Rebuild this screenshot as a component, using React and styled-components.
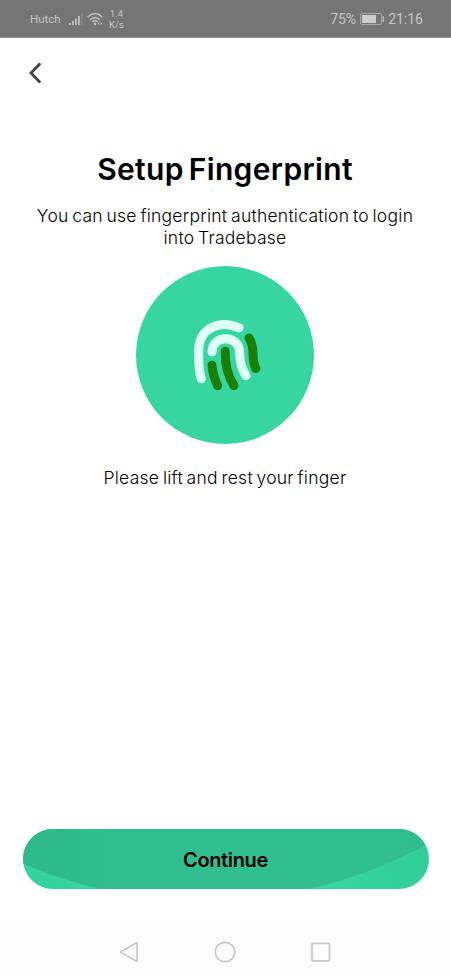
import styled, { createGlobalStyle } from 'styled-components'

const GlobalStyle = createGlobalStyle`
  * {
    box-sizing: border-box;
  }

  body {
    margin: 0;
    background: #ffffff;
    font-family: Inter, "Liberation Sans", sans-serif;
    color: #000000;
  }
`

const Screen = styled.div`
  display: flex;
  flex-direction: column;
  height: 100vh;
  overflow: hidden;
`

const StatusBar = styled.header`
  display: flex;
  justify-content: space-between;
  align-items: center;
  height: 38px;
  flex-shrink: 0;
  padding: 1px 28px 0 30px;
  background: #757575;
  border-bottom: 1px solid #949494;
  color: #c4c4c4;
  font-family: Roboto, sans-serif;
`

const StatusGroup = styled.div`
  display: flex;
  align-items: center;
  gap: 4px;

  svg {
    display: block;
    flex-shrink: 0;
  }
`

const Carrier = styled.span`
  width: 35px;
  font-size: 11.5px;
  line-height: 16px;
  white-space: nowrap;
`

const Speed = styled.span`
  margin-left: 1px;
  font-size: 9.5px;
  line-height: 11px;
  text-align: center;
`

const StatusText = styled.span`
  font-size: 14px;
  line-height: 18px;
`

const TopBar = styled.nav`
  display: flex;
  align-items: center;
  height: 69px;
  flex-shrink: 0;
  padding-left: 25px;
`

const BackButton = styled.button`
  display: flex;
  padding: 0;
  border: 0;
  background: none;
`

const Content = styled.main`
  display: flex;
  flex: 1;
  flex-direction: column;
  align-items: center;
  padding-top: 42px;
  padding-right: 1px;
  text-align: center;
`

const Title = styled.h1`
  margin: 0;
  font-size: 30px;
  font-weight: 600;
  line-height: 40px;
  letter-spacing: 0.35px;
  word-spacing: -3px;
  white-space: nowrap;
`

const Text = styled.p`
  margin: ${props => props.$margin};
  font-size: 17.5px;
  font-weight: 300;
  line-height: 22px;
  letter-spacing: 0.25px;
  word-spacing: -1.5px;
  white-space: nowrap;
`

const FingerprintCircle = styled.div`
  display: grid;
  place-items: center;
  width: 178px;
  height: 178px;
  padding-right: 1px;
  border-radius: 50%;
  background: #37d6a0;
`

const Footer = styled.footer`
  flex-shrink: 0;
  padding: 0 22.5px 37px;
`

const ContinueButton = styled.button`
  position: relative;
  display: block;
  width: 100%;
  height: 60px;
  padding: 2px 0 0;
  overflow: hidden;
  border: 0;
  border-radius: 30px;
  background: linear-gradient(90deg, #34d39e, #37d6a0 30%, #37d6a0 75%, #33cd99);
  color: #000000;
  font-family: inherit;
  font-size: 20px;
  font-weight: 600;
`

// Press ripple, mostly outside of the button
const Ripple = styled.span`
  position: absolute;
  top: -854px;
  left: -281px;
  width: 926px;
  height: 926px;
  border-radius: 50%;
  background: linear-gradient(90deg, #2eb98b 33%, #32bf90 41%, #32bf90 70%, #2eb88a 77%);
`

const Label = styled.span`
  position: relative;
  letter-spacing: -0.35px;
`

const NavigationBar = styled.nav`
  display: flex;
  justify-content: center;
  align-items: center;
  gap: 72px;
  height: 51px;
  flex-shrink: 0;
  padding-right: 1px;
  background: #fcfcfc;
`

const SignalIcon = () => (
  <svg width="14" height="13" viewBox="0 0 14 13" fill="#c4c4c4">
    <rect x="0" y="10" width="1.7" height="2" />
    <rect x="3" y="8" width="1.7" height="4" />
    <rect x="6" y="5.5" width="1.7" height="6.5" />
    <rect x="9" y="3" width="1.7" height="9" />
    <rect x="12" y="0" width="1.7" height="12" opacity="0.25" />
  </svg>
)

const WifiIcon = () => (
  <svg width="17" height="14" viewBox="0 0 17 14" fill="none" stroke="#c4c4c4" strokeWidth="1.4">
    <path d="M.7 5.1Q8 -1.9 15.3 5.1" />
    <path d="M3.1 7.8Q8 3.1 12.9 7.8" />
    <path d="M5.3 10.1Q8 7.6 10.7 10.1" />
    <circle cx="8" cy="12" r="1.2" fill="#c4c4c4" stroke="none" />
    <path d="M12.2 10v3l-1.2-1.3zM13.7 10v3l1.4-1.5z" fill="#c4c4c4" stroke="none" />
  </svg>
)

const BatteryIcon = () => (
  <svg width="24" height="12" viewBox="0 0 24 12">
    <rect x=".5" y=".5" width="21" height="11" rx="1.5" fill="none" stroke="#a8a8a8" />
    <rect x="2" y="2" width="14" height="8" fill="#cdcdcd" />
    <rect x="22.5" y="3" width="1.3" height="6" rx=".5" fill="#c4c4c4" />
  </svg>
)

const FingerprintIcon = () => (
  <svg width="90" height="90" viewBox="0 0 90 90" fill="none" strokeWidth="9" strokeLinecap="round">
    <g stroke="#e0fff4">
      <path d="M21.3 68.7C18.2 60 18.5 51 18.7 39.5C19.4 18.2 39.5 9.2 59.2 17.8" />
      <path d="M32 41.7C32 24.2 59.7 24 59.7 43.2C59.7 52 61.3 58.5 66 65.7" />
    </g>
    <g stroke="#1a7f08">
      <path d="M32 55.2Q33.1 66.4 37.7 75.8" />
      <path d="M45.2 41.2C45 55.3 47.2 65.2 54 75.8" />
      <path d="M69 28C76.5 40 70 46 75.8 58.5" />
    </g>
  </svg>
)

const App = () => {
  return (
    <Screen>
      <GlobalStyle />
      <StatusBar>
        <StatusGroup>
          <Carrier>Hutch</Carrier>
          <SignalIcon />
          <WifiIcon />
          <Speed>1.4<br />K/s</Speed>
        </StatusGroup>
        <StatusGroup>
          <StatusText>75%</StatusText>
          <BatteryIcon />
          <StatusText>21:16</StatusText>
        </StatusGroup>
      </StatusBar>
      <TopBar>
        <BackButton aria-label="Back">
          <svg width="20" height="24" viewBox="0 0 20 24" fill="none">
            <path d="M14.5 3.2L6 12L14.5 20.7" stroke="#444444" strokeWidth="2.8" strokeLinecap="round" />
          </svg>
        </BackButton>
      </TopBar>
      <Content>
        <Title>Setup Fingerprint</Title>
        <Text $margin="16px 0 17px">
          You can use fingerprint authentication to login<br />into Tradebase
        </Text>
        <FingerprintCircle>
          <FingerprintIcon />
        </FingerprintCircle>
        <Text $margin="23px 0 0">Please lift and rest your finger</Text>
      </Content>
      <Footer>
        <ContinueButton>
          <Ripple />
          <Label>Continue</Label>
        </ContinueButton>
      </Footer>
      <NavigationBar>
        <svg width="24" height="24" viewBox="0 0 24 24" fill="none" stroke="#c8c8c8" strokeWidth="1.7" strokeLinejoin="round">
          <path d="M20 2.5V21.5L3.5 12Z" />
        </svg>
        <svg width="24" height="24" viewBox="0 0 24 24" fill="none" stroke="#c8c8c8" strokeWidth="1.7">
          <circle cx="12" cy="12" r="9.7" />
        </svg>
        <svg width="24" height="24" viewBox="0 0 24 24" fill="none" stroke="#c8c8c8" strokeWidth="1.7">
          <rect x="3" y="3.3" width="17.5" height="17.5" rx="1" />
        </svg>
      </NavigationBar>
    </Screen>
  )
}

export default App
